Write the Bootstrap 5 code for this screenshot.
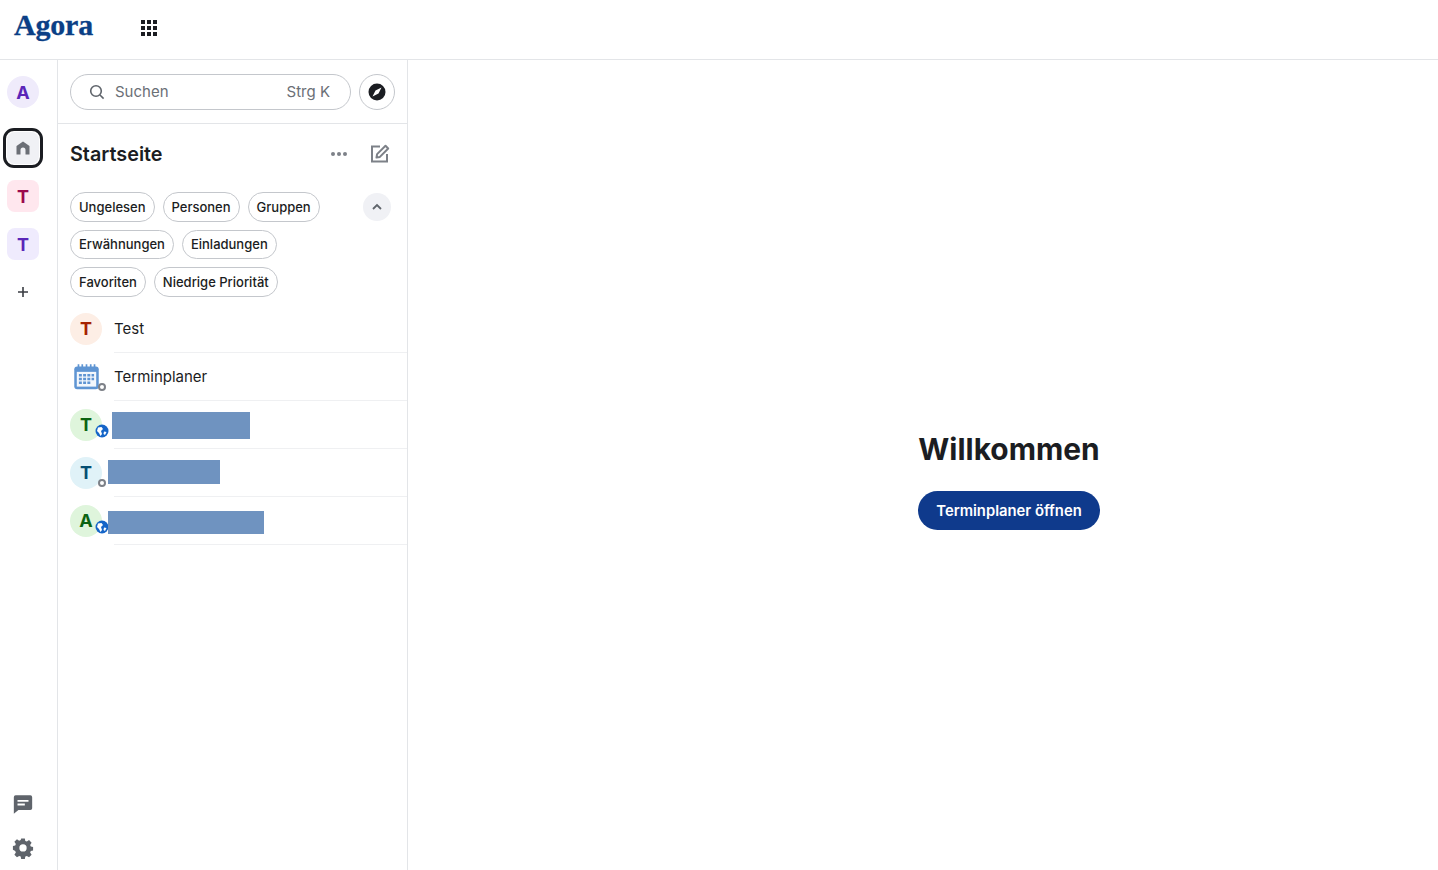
<!DOCTYPE html>
<html lang="de">
<head>
    <meta charset="UTF-8">
    <meta name="viewport" content="width=device-width, initial-scale=1.0">
    <title>Agora</title>
    <link href="https://cdn.jsdelivr.net/npm/bootstrap@5.3.0/dist/css/bootstrap.min.css" rel="stylesheet">
    <style>
        html, body { height: 100%; }
        body { font-family: Inter, "Liberation Sans", sans-serif; color: #1b1d22; background: #fff; overflow: hidden; }
        .top-bar { height: 60px; border-bottom: 1px solid #e3e5e8; padding: 0 0 0 14px; }
        .brand { font-family: "Liberation Serif", serif; font-weight: 700; font-size: 30px; color: #0b3f86; line-height: 1; width: 80px; margin-top: -9px; letter-spacing: -.2px; -webkit-text-stroke: .3px #0b3f86; }
        .apps-grid { margin-left: 46px; margin-top: -4px; line-height: 0; }
        .app-body { height: 810px; }
        .rail { width: 58px; border-right: 1px solid #e3e5e8; padding: 16px 11px 11px 0; }
        .rail-tile { width: 32px; height: 32px; font-weight: 700; font-size: 18px; border-radius: 8px; }
        .tile-home { background: #f0f1f5; }
        .home-ring { width: 40px; height: 40px; flex: none; margin: 20px 0 12px; border: 3px solid #1b1d22; border-radius: 11px; }
        .rail-a { background: #efebfb; color: #5a26b8; border-radius: 50%; }
        .rail-pink { background: #ffe7ee; color: #9b0a4d; }
        .rail-violet { background: #efebfd; color: #5a26b8; }
        .rail-foot { gap: 22px; }
        .room-panel { width: 350px; border-right: 1px solid #e3e5e8; }
        .search-row { height: 64px; padding: 14px 12px 0; border-bottom: 1px solid #e3e5e8; gap: 8px; }
        .search-pill { height: 36px; flex: 1; border: 1px solid #c4c7cc; border-radius: 18px; padding: 0 20px 0 18px; color: #6b6f76; font-size: 15px; }
        .search-label { margin-left: 10px; }
        .explore-btn { width: 36px; height: 36px; border: 1px solid #c4c7cc; border-radius: 50%; }
        .panel-head { padding: 0 17px 0 12px; height: 60px; }
        .panel-head h1 { font-size: 19.800px; font-weight: 600; margin: 2px 0 0; }
        .more-dots { margin-right: 22px; }
        .chip-area { padding: 8px 16px 0 12px; }
        .chip-rows { gap: 8px; }
        .chip-line { gap: 8px; }
        .chip { height: 30px; border: 1px solid #c4c7cc; border-radius: 15px; padding: 0 8px; font-size: 13px; font-weight: 500; line-height: 28px; white-space: nowrap; }
        .chip-line-mid .chip { height: 29px; line-height: 27px; }
        .collapse-btn { width: 28px; height: 28px; background: #f0f1f5; border-radius: 50%; margin-top: 1px; }
        .room-list { margin-top: 8px; }
        .room-row { height: 48px; padding-left: 12px; }
        .room-avatar { width: 32px; height: 32px; flex: none; padding-bottom: 2px; font-weight: 700; font-size: 18px; border-radius: 50%; }
        .av-orange { background: #fdeee5; color: #a62200; }
        .av-green { background: #dff5dc; color: #0b6312; }
        .av-blue { background: #e0f2f8; color: #064f73; }
        .room-name { flex: 1; height: 48px; margin-left: 12px; border-bottom: 1px solid #eff0f2; font-size: 15px; line-height: 47px; }
        .state-ring { position: absolute; right: -4px; bottom: 2px; width: 8px; height: 8px; background: #fff; border: 2px solid #7d8188; border-radius: 50%; }
        .state-globe { position: absolute; right: -7px; bottom: 3px; width: 14px; height: 14px; line-height: 0; }
        .blur-box { position: absolute; background: #6f93c0; }
        .main-area { padding: 31px 0 0 172px; }
        .main-area h2 { font-size: 29.900px; font-weight: 700; margin: 0 0 24px; line-height: 36px; color: #1b1d22; }
        .open-btn { height: 39px; width: 182px; background: #0f3a8c; color: #fff; border: 0; border-radius: 20px; font-size: 14.800px; font-weight: 600; padding: 1px 0 0; }
    </style>
</head>
<body>
    <div class="top-bar d-flex align-items-center">
        <div class="brand">Agora</div>
        <div class="apps-grid">
            <svg width="18" height="18" viewBox="0 0 18 18" fill="#1b1d22">
                <rect x="1" y="1" width="4" height="4"/><rect x="7" y="1" width="4" height="4"/><rect x="13" y="1" width="4" height="4"/>
                <rect x="1" y="7" width="4" height="4"/><rect x="7" y="7" width="4" height="4"/><rect x="13" y="7" width="4" height="4"/>
                <rect x="1" y="13" width="4" height="4"/><rect x="7" y="13" width="4" height="4"/><rect x="13" y="13" width="4" height="4"/>
            </svg>
        </div>
    </div>
    <div class="app-body d-flex">
        <nav class="rail d-flex flex-column align-items-center">
            <div class="rail-tile rail-a d-flex align-items-center justify-content-center">A</div>
            <div class="home-ring d-flex align-items-center justify-content-center">
                <div class="rail-tile tile-home d-flex align-items-center justify-content-center">
                    <svg width="16" height="16" viewBox="0 0 16 16" fill="#6b6f76"><path d="M8 1.500 14.500 6v8.500h-4V10a2.500 2.500 0 0 0-5 0v4.500h-4V6z"/></svg>
                </div>
            </div>
            <div class="rail-tile rail-pink d-flex align-items-center justify-content-center">T</div>
            <div class="mt-3 rail-tile rail-violet d-flex align-items-center justify-content-center">T</div>
            <div class="mt-3 rail-tile d-flex align-items-center justify-content-center">
                <svg width="12" height="12" viewBox="0 0 12 12" stroke="#3a3d43" stroke-width="1.600"><path d="M6 1v10M1 6h10"/></svg>
            </div>
            <div class="rail-foot mt-auto d-flex flex-column align-items-center">
                <svg class="d-block" width="22" height="22" viewBox="0 0 24 24" fill="#5f646b"><path fill-rule="evenodd" d="M4 2.500h16a2 2 0 0 1 2 2v12a2 2 0 0 1-2 2H7l-5 4v-18a2 2 0 0 1 2-2zM6 7.500v2h12v-2zM6 11.500v2h8v-2z"/></svg>
                <svg class="d-block" width="22" height="22" viewBox="0 0 24 24" fill="#5f646b"><path fill-rule="evenodd" d="M10 1.500h4l.5 2.800 1.700.7 2.400-1.600 2.800 2.800-1.600 2.400.7 1.700 2.500.5v4l-2.500.5-.7 1.700 1.600 2.400-2.800 2.800-2.400-1.600-1.700.7-.5 2.600h-4l-.5-2.600-1.700-.7-2.400 1.600-2.800-2.800 1.600-2.400-.7-1.700L1 13.800v-4l2.500-.5.7-1.700-1.600-2.400 2.800-2.800 2.400 1.600 1.700-.7zM12 7.900a4 4 0 1 0 0 8 4 4 0 0 0 0-8z"/></svg>
            </div>
        </nav>

        <aside class="room-panel d-flex flex-column">
            <div class="search-row d-flex">
                <div class="search-pill d-flex align-items-center">
                    <svg width="16" height="16" viewBox="0 0 16 16" fill="none" stroke="#5f646b" stroke-width="1.600"><circle cx="7" cy="7" r="5.300"/><path d="m11 11 3.600 3.600"/></svg>
                    <span class="search-label">Suchen</span>
                    <span class="ms-auto">Strg K</span>
                </div>
                <div class="explore-btn d-flex align-items-center justify-content-center">
                    <svg width="18" height="18" viewBox="0 0 18 18"><circle cx="9" cy="9" r="8.500" fill="#1b1d22"/><path d="M13.500 4.500 10.500 10.500 4.500 13.500 7.500 7.500z" fill="#fff"/></svg>
                </div>
            </div>
            <div class="panel-head d-flex align-items-center">
                <h1>Startseite</h1>
                <svg class="ms-auto more-dots" width="18" height="6" viewBox="0 0 18 6" fill="#7d8188"><circle cx="3" cy="3" r="2"/><circle cx="9" cy="3" r="2"/><circle cx="15" cy="3" r="2"/></svg>
                <svg width="20" height="20" viewBox="0 0 20 20" fill="none" stroke="#7d8188" stroke-width="2"><path d="M10 2.500H2v15h15V10"/><path d="M6.500 13.500l.6-3.400L15.500 1.800l2.700 2.700-8.300 8.400z" stroke-linejoin="round"/></svg>
            </div>
            <div class="chip-area d-flex justify-content-between">
                <div class="chip-rows d-flex flex-column">
                    <div class="chip-line d-flex"><span class="chip">Ungelesen</span><span class="chip">Personen</span><span class="chip">Gruppen</span></div>
                    <div class="chip-line chip-line-mid d-flex"><span class="chip">Erwähnungen</span><span class="chip">Einladungen</span></div>
                    <div class="chip-line d-flex"><span class="chip">Favoriten</span><span class="chip">Niedrige Priorität</span></div>
                </div>
                <div class="collapse-btn d-flex align-items-center justify-content-center">
                    <svg width="12" height="8" viewBox="0 0 12 8" fill="none" stroke="#5f646b" stroke-width="1.800"><path d="M2 6l4-4 4 4"/></svg>
                </div>
            </div>
            <div class="room-list">
                <div class="room-row d-flex align-items-center">
                    <div class="room-avatar av-orange d-flex align-items-center justify-content-center">T</div>
                    <div class="room-name">Test</div>
                </div>
                <div class="room-row d-flex align-items-center">
                    <div class="room-avatar d-flex align-items-center justify-content-center position-relative">
                        <svg width="27" height="27" viewBox="0 0 32 32">
                            <rect x="1.500" y="4" width="29" height="27" rx="3.500" fill="#5f95d3"/>
                            <rect x="4.500" y="10.500" width="23" height="17.500" fill="#f3f7fc"/>
                            <path d="M6.500 1.500v5M11 1.500v5M16 1.500v5M21 1.500v5M25.500 1.500v5" stroke="#5f95d3" stroke-width="2"/>
                            <path d="M7 13h3.500v3H7zM12 13h3.500v3H12zM17 13h3.500v3H17zM22 13h3v3h-3zM7 17.500h3.500v3H7zM12 17.500h3.500v3H12zM17 17.500h3.500v3H17zM22 17.500h3v3h-3zM7 22h3.500v3H7zM12 22h3.500v3H12zM17 22h3.500v3H17z" fill="#5f95d3"/>
                        </svg>
                        <span class="state-ring"></span>
                    </div>
                    <div class="room-name">Terminplaner</div>
                </div>
                <div class="room-row d-flex align-items-center position-relative">
                    <div class="room-avatar av-green d-flex align-items-center justify-content-center position-relative">T
                        <span class="state-globe"><svg width="14" height="14" viewBox="0 0 14 14"><circle cx="7" cy="7" r="6.500" fill="#1565c8"/><path d="M3 3.500 6.500 3 8 5 6 7 7 10 5.500 12 4 9 2 7zM9 7.500l2.500.5-1.500 3-1.500-1z" fill="#fff"/></svg></span>
                    </div>
                    <div class="room-name"></div>
                    <div class="blur-box" style="left:54px;top:11px;width:138px;height:27px"></div>
                </div>
                <div class="room-row d-flex align-items-center position-relative">
                    <div class="room-avatar av-blue d-flex align-items-center justify-content-center position-relative">T
                        <span class="state-ring"></span>
                    </div>
                    <div class="room-name"></div>
                    <div class="blur-box" style="left:50px;top:11px;width:112px;height:24px"></div>
                </div>
                <div class="room-row d-flex align-items-center position-relative">
                    <div class="room-avatar av-green d-flex align-items-center justify-content-center position-relative">A
                        <span class="state-globe"><svg width="14" height="14" viewBox="0 0 14 14"><circle cx="7" cy="7" r="6.500" fill="#1565c8"/><path d="M3 3.500 6.500 3 8 5 6 7 7 10 5.500 12 4 9 2 7zM9 7.500l2.500.5-1.500 3-1.500-1z" fill="#fff"/></svg></span>
                    </div>
                    <div class="room-name"></div>
                    <div class="blur-box" style="left:50px;top:14px;width:156px;height:23px"></div>
                </div>
            </div>
        </aside>

        <main class="main-area flex-grow-1 d-flex flex-column align-items-center justify-content-center">
            <h2>Willkommen</h2>
            <button class="btn open-btn" type="button">Terminplaner öffnen</button>
        </main>
    </div>
</body>
</html>
